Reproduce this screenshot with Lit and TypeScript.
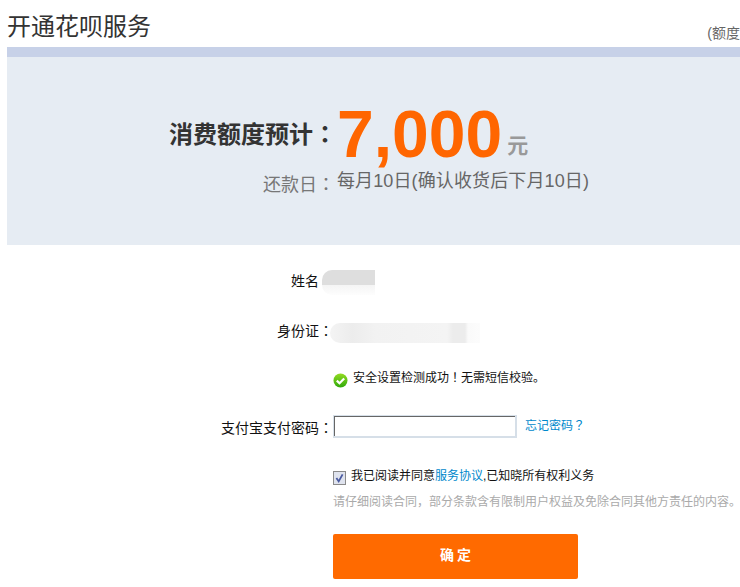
import { LitElement, html, css } from "lit";
import { customElement } from "lit/decorators.js";

@customElement("app-root")
export class AppRoot extends LitElement {
  static styles = css`
    :host {
      display: block;
      width: 740px;
      height: 587px;
      overflow: hidden;
      background: #fff;
      font-family: "Liberation Sans", "Noto Sans CJK SC", sans-serif;
      color: #222;
    }
    .head {
      display: flex;
      justify-content: space-between;
      align-items: flex-end;
      height: 47px;
      padding-left: 7px;
      box-sizing: border-box;
    }
    h1 {
      margin: 0 0 4px;
      font-size: 24px;
      line-height: 32px;
      font-weight: 400;
      color: #333;
    }
    .quota-note {
      font-size: 14px;
      line-height: 20px;
      color: #666;
      white-space: nowrap;
      margin-bottom: 4px;
    }
    .panel {
      margin-left: 7px;
      height: 198px;
      box-sizing: border-box;
      border-top: 10px solid #c7d1e8;
      background: #e6ecf3;
      padding-top: 40px;
    }
    .line {
      display: grid;
      grid-template-columns: 330px 1fr;
      align-items: center;
    }
    .jp {
      font-family: "Noto Sans CJK JP", sans-serif;
    }
    .amount-label {
      text-align: right;
      font-size: 24px;
      line-height: 34px;
      font-weight: 700;
      color: #333;
    }
    .amount {
      display: flex;
      align-items: baseline;
      white-space: nowrap;
      font-size: 66px;
      line-height: 74px;
      font-weight: 700;
      color: #ff6600;
    }
    .unit {
      margin-left: 5px;
      font-size: 21px;
      line-height: 24px;
      color: #999;
      position: relative;
      top: -4px;
    }
    .due {
      margin-top: -4px;
      grid-template-columns: 328px 1fr;
    }
    .due-label {
      text-align: right;
      font-size: 18px;
      line-height: 26px;
      color: #777;
      position: relative;
      top: 3px;
    }
    .due-value {
      padding-left: 2px;
      font-size: 18px;
      line-height: 26px;
      letter-spacing: 0.12px;
      color: #666;
      white-space: nowrap;
    }
    .form {
      display: flex;
      flex-direction: column;
      font-size: 14px;
    }
    .row {
      display: grid;
      grid-template-columns: 333px 1fr;
      align-items: center;
    }
    .label {
      text-align: right;
      color: #111;
      font-size: 14px;
      line-height: 20px;
      white-space: nowrap;
    }
    .colon {
      display: inline-block;
      width: 14px;
      text-align: center;
    }
    .r-name { height: 25px; margin-top: 25px; align-items: start; }
    .r-name .label { margin-top: 1px; }
    .r-id { height: 22px; margin-top: 24px; align-items: start; }
    .r-id .label { margin-top: 1px; }
    .r-safe { height: 18px; margin-top: 28px; }
    .r-pwd { height: 23px; margin-top: 28px; }
    .r-pwd .label { margin-top: 2px; }
    .r-agree { height: 16px; margin-top: 30px; }
    .r-note { height: 18px; margin-top: 9px; }
    .r-btn { margin-top: 23px; }
    .mask-name {
      width: 53px;
      height: 25px;
      margin-left: -11px;
      border-radius: 10px 0 0 10px;
      background: linear-gradient(180deg, #dedede 0 58%, #f5f5f5 62%, #fdfdfd 100%);
    }
    .mask-id {
      width: 150px;
      height: 20px;
      margin: 4px 0 0 -3px;
      border-radius: 10px 0 0 10px;
      background: linear-gradient(90deg, #f4f4f4 0, #ececec 15%, #f2f2f2 30%, #f4f4f4 78%, #ececec 82%, #ececec 90%, #fafafa 92%, #fcfcfc 100%);
    }
    .safe {
      display: flex;
      align-items: center;
      gap: 5px;
      font-size: 12px;
      line-height: 18px;
      color: #111;
      white-space: nowrap;
    }
    .safe svg { display: block; margin-top: 4px; }
    .safe span { margin-top: -3px; }
    .pwd {
      display: flex;
      align-items: center;
      gap: 9px;
    }
    input {
      display: block;
      width: 184px;
      height: 23px;
      box-sizing: border-box;
      margin: 0;
      padding: 0 3px;
      background: #fff;
      border: 1px solid #d6dfe8;
      border-width: 1px 2px 2px 1px;
      box-shadow: inset 1px 1px 0 #666;
      outline: none;
    }
    a {
      color: #0088cc;
      text-decoration: none;
    }
    .forgot {
      font-size: 12px;
      line-height: 18px;
      margin: -2px 0 0 -1px;
      white-space: nowrap;
    }
    .agree {
      display: flex;
      align-items: flex-start;
      gap: 5px;
      font-size: 12px;
      line-height: 16px;
      white-space: nowrap;
      color: #111;
    }
    .agree svg { display: block; margin-top: 3px; }
    .note {
      font-size: 12px;
      line-height: 18px;
      color: #aaa;
      white-space: nowrap;
    }
    button {
      display: block;
      width: 245px;
      height: 45px;
      box-sizing: border-box;
      border: 0;
      border-radius: 2px;
      padding: 0 0 5px 3px;
      background: #ff6a00;
      color: #fff;
      font: 700 14px "Liberation Sans", "Noto Sans CJK SC", sans-serif;
      letter-spacing: 3px;
    }
  `;

  render() {
    return html`
      <div class="head">
        <h1>开通花呗服务</h1>
        <div class="quota-note">(额度</div>
      </div>
      <section class="panel">
        <div class="line">
          <div class="amount-label">消费额度预计<span class="jp">：</span></div>
          <div class="amount">7,000<span class="unit">元</span></div>
        </div>
        <div class="line due">
          <div class="due-label">还款日<span class="jp">：</span></div>
          <div class="due-value">每月10日(确认收货后下月10日)</div>
        </div>
      </section>
      <div class="form">
        <div class="row r-name">
          <div class="label">姓名<span class="colon"></span></div>
          <div class="mask-name"></div>
        </div>
        <div class="row r-id">
          <div class="label">身份证<span class="colon jp">：</span></div>
          <div class="mask-id"></div>
        </div>
        <div class="row r-safe">
          <div></div>
          <div class="safe">
            <svg width="15" height="15" viewBox="0 0 15 15">
              <defs>
                <linearGradient id="g" x1="0" y1="0" x2="0" y2="1">
                  <stop offset="0" stop-color="#94dc22" />
                  <stop offset="1" stop-color="#2fa80a" />
                </linearGradient>
              </defs>
              <circle cx="7.5" cy="7.5" r="7" fill="url(#g)" />
              <path d="M3.8 7.6 6.5 10.2 11.2 5.4" fill="none" stroke="#fff" stroke-width="2.2" />
            </svg>
            <span>安全设置检测成功<span class="jp">！</span>无需短信校验。</span>
          </div>
        </div>
        <div class="row r-pwd">
          <div class="label">支付宝支付密码<span class="colon jp">：</span></div>
          <div class="pwd">
            <input type="password" aria-label="支付宝支付密码" />
            <a class="forgot" href="#">忘记密码<span class="jp">？</span></a>
          </div>
        </div>
        <div class="row r-agree">
          <div></div>
          <div class="agree">
            <svg width="13" height="14" viewBox="0 0 13 14">
              <rect x="0.5" y="0.5" width="12" height="13" fill="#dfe3ee" stroke="#8a8a8a" />
              <path d="M3.4 7 5.7 10.4 9.6 3.4" fill="none" stroke="#4a5aa0" stroke-width="1.8" />
            </svg>
            <span>我已阅读并同意<a href="#">服务协议</a>,已知晓所有权利义务</span>
          </div>
        </div>
        <div class="row r-note">
          <div></div>
          <div class="note">请仔细阅读合同，部分条款含有限制用户权益及免除合同其他方责任的内容。</div>
        </div>
        <div class="row r-btn">
          <div></div>
          <button type="button">确定</button>
        </div>
      </div>
    `;
  }
}
